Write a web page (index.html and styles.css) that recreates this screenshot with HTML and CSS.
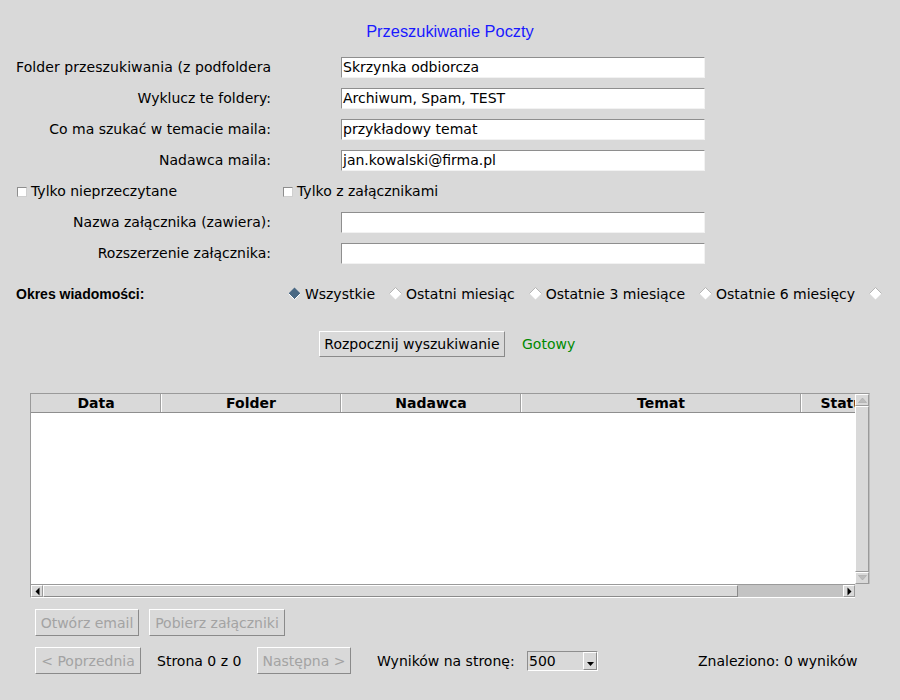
FILE: index.html
```html
<!DOCTYPE html>
<html lang="pl">
<head>
<meta charset="utf-8">
<title>Przeszukiwanie Poczty</title>
<link rel="stylesheet" href="styles.css">
</head>
<body>
<div class="title">Przeszukiwanie Poczty</div>

<div class="form">
  <label class="lbl">Folder przeszukiwania (z podfoldera</label>
  <div class="entry">Skrzynka odbiorcza</div>
  <label class="lbl">Wyklucz te foldery:</label>
  <div class="entry">Archiwum, Spam, TEST</div>
  <label class="lbl">Co ma szukać w temacie maila:</label>
  <div class="entry">przykładowy temat</div>
  <label class="lbl">Nadawca maila:</label>
  <div class="entry">jan.kowalski@firma.pl</div>
  <div class="checks">
    <span class="check check-first"><span class="cbox"></span>Tylko nieprzeczytane</span>
    <span class="check"><span class="cbox"></span>Tylko z załącznikami</span>
  </div>
  <label class="lbl">Nazwa załącznika (zawiera):</label>
  <div class="entry"></div>
  <label class="lbl">Rozszerzenie załącznika:</label>
  <div class="entry"></div>
</div>

<div class="period">
  <span class="period-label">Okres wiadomości:</span>
  <span class="radio"><svg class="dia" width="13" height="13" viewBox="0 0 13 13"><polygon points="6.5,0.5 12.5,6.5 6.5,12.5 0.5,6.5" fill="#4a6984"/><polyline points="12.5,6.5 6.5,12.5 0.5,6.5" fill="none" stroke="#ffffff" stroke-width="1"/></svg>Wszystkie</span>
  <span class="radio"><svg class="dia" width="13" height="13" viewBox="0 0 13 13"><polygon points="6.5,0.5 12.5,6.5 6.5,12.5 0.5,6.5" fill="#ffffff"/><polyline points="0.5,6.5 6.5,0.5 12.5,6.5" fill="none" stroke="#b5b5b5" stroke-width="1"/></svg>Ostatni miesiąc</span>
  <span class="radio"><svg class="dia" width="13" height="13" viewBox="0 0 13 13"><polygon points="6.5,0.5 12.5,6.5 6.5,12.5 0.5,6.5" fill="#ffffff"/><polyline points="0.5,6.5 6.5,0.5 12.5,6.5" fill="none" stroke="#b5b5b5" stroke-width="1"/></svg>Ostatnie 3 miesiące</span>
  <span class="radio"><svg class="dia" width="13" height="13" viewBox="0 0 13 13"><polygon points="6.5,0.5 12.5,6.5 6.5,12.5 0.5,6.5" fill="#ffffff"/><polyline points="0.5,6.5 6.5,0.5 12.5,6.5" fill="none" stroke="#b5b5b5" stroke-width="1"/></svg>Ostatnie 6 miesięcy</span>
  <span class="radio"><svg class="dia" width="13" height="13" viewBox="0 0 13 13"><polygon points="6.5,0.5 12.5,6.5 6.5,12.5 0.5,6.5" fill="#ffffff"/><polyline points="0.5,6.5 6.5,0.5 12.5,6.5" fill="none" stroke="#b5b5b5" stroke-width="1"/></svg></span>
</div>

<div class="action">
  <span class="btn btn-search">Rozpocznij wyszukiwanie</span>
  <span class="status">Gotowy</span>
</div>

<div class="table">
  <div class="tree">
    <div class="thead">
      <span class="th c-data">Data</span>
      <span class="th c-folder">Folder</span>
      <span class="th c-from">Nadawca</span>
      <span class="th c-subj">Temat</span>
      <span class="th c-stat">Status</span>
    </div>
    <div class="tbody"></div>
  </div>
  <div class="vscroll">
    <span class="varrow"><svg width="9" height="6" viewBox="0 0 9 6"><polygon points="0.5,5.5 4.5,1 8.5,5.5" fill="#bcbcbc" stroke="#a8a8a8" stroke-width="0.6"/></svg></span>
    <span class="vthumb"></span>
    <span class="varrow varrow-down"><svg width="9" height="6" viewBox="0 0 9 6"><polygon points="0.5,0.5 4.5,5 8.5,0.5" fill="#bcbcbc" stroke="#a8a8a8" stroke-width="0.6"/></svg></span>
  </div>
  <div class="hscroll">
    <span class="harrow"><svg width="5" height="9" viewBox="0 0 5 9"><polygon points="4.5,0.5 0.5,4.5 4.5,8.5" fill="#000"/></svg></span>
    <span class="hthumb"></span>
    <span class="htrough"></span>
    <span class="harrow"><svg width="5" height="9" viewBox="0 0 5 9"><polygon points="0.5,0.5 4.5,4.5 0.5,8.5" fill="#000"/></svg></span>
  </div>
  <div class="corner"></div>
</div>

<div class="row row-actions">
  <span class="btn btn-dis w-open">Otwórz email</span>
  <span class="btn btn-dis w-att">Pobierz załączniki</span>
</div>

<div class="row row-pager">
  <span class="btn btn-dis w-prev">&lt; Poprzednia</span>
  <span class="pg-text">Strona 0 z 0</span>
  <span class="btn btn-dis w-next">Następna &gt;</span>
  <span class="per-text">Wyników na stronę:</span>
  <span class="combo"><span class="combo-val">500</span><span class="combo-btn"><svg width="9" height="6" viewBox="0 0 9 6"><polygon points="1,1 8,1 4.5,5" fill="#000"/></svg></span></span>
  <span class="found">Znaleziono: 0 wyników</span>
</div>
</body>
</html>
```

FILE: styles.css
```css
* { box-sizing: border-box; }
html, body { margin: 0; padding: 0; }
body {
  width: 900px;
  height: 700px;
  overflow: hidden;
  background: #d9d9d9;
  font-family: "DejaVu Sans", sans-serif;
  font-size: 14px;
  color: #000;
}

.title {
  font-family: "Liberation Sans", Arial, sans-serif;
  font-size: 16.4px;
  line-height: 18px;
  color: #1a1aff;
  text-align: center;
  padding-top: 22px;
}

.form {
  display: grid;
  grid-template-columns: 255px 364px;
  grid-auto-rows: 21px;
  column-gap: 70px;
  row-gap: 10px;
  margin: 17px 0 0 16px;
}
.lbl {
  text-align: right;
  line-height: 21px;
  white-space: nowrap;
  overflow: hidden;
}
.lbl:first-child { letter-spacing: 0.08px; }
.entry {
  background: #fff;
  border: 1px solid;
  border-color: #8e8e8e #f2f2f2 #f2f2f2 #8e8e8e;
  padding-left: 1px;
  line-height: 19px;
  white-space: nowrap;
}
.checks {
  grid-column: 1 / -1;
  display: flex;
  align-items: center;
  padding-left: 1px;
}
.check {
  display: flex;
  align-items: center;
  line-height: 21px;
}
.check-first { width: 266px; }
.cbox {
  width: 10px;
  height: 10px;
  background: #fff;
  border: 1px solid;
  border-color: #8e8e8e #cfcfcf #cfcfcf #8e8e8e;
  margin-right: 4px;
}

.period {
  display: flex;
  align-items: center;
  margin: 19px 0 0 16px;
  height: 21px;
  white-space: nowrap;
}
.period-label {
  font-family: "Liberation Sans", Arial, sans-serif;
  font-weight: bold;
  font-size: 14px;
  width: 272px;
}
.radio {
  display: flex;
  align-items: center;
  margin-right: 14px;
}
.dia { margin-right: 4px; flex: none; }

.action {
  display: flex;
  align-items: center;
  margin: 27px 0 0 319px;
  height: 26px;
}
.btn {
  display: inline-flex;
  align-items: center;
  justify-content: center;
  border: 1px solid;
  border-color: #ffffff #8a8a8a #8a8a8a #ffffff;
  background: #d9d9d9;
  white-space: nowrap;
  flex: none;
}
.btn-search { width: 186px; height: 26px; }
.status { color: #008a00; margin-left: 17px; }

.table {
  display: grid;
  grid-template-columns: 825px 15px;
  grid-template-rows: 191px 14px;
  margin: 36px 0 0 30px;
  width: 840px;
}
.tree {
  border-top: 1px solid #9a9a9a;
  border-left: 1px solid #9a9a9a;
  background: #fff;
  overflow: hidden;
  display: flex;
  flex-direction: column;
}
.thead {
  display: flex;
  height: 19px;
  background: #d9d9d9;
  border-bottom: 1px solid #8e8e8e;
  flex: none;
}
.th {
  flex: none;
  font-weight: bold;
  font-size: 14px;
  text-align: center;
  line-height: 18px;
  border-left: 1px solid #ffffff;
  border-right: 1px solid #a0a0a0;
  white-space: nowrap;
  overflow: hidden;
}
.c-data { width: 130px; border-left-color: #d9d9d9; }
.c-folder { width: 180px; }
.c-from { width: 180px; }
.c-subj { width: 280px; }
.c-stat { width: 90px; }
.tbody { flex: 1; background: #fff; }

.vscroll {
  display: flex;
  flex-direction: column;
  background: #d9d9d9;
  border-top: 1px solid #9a9a9a;
  border-right: 1px solid #bdbdbd;
}
.varrow {
  height: 12px;
  display: flex;
  align-items: center;
  justify-content: center;
  border: 1px solid;
  border-color: #ffffff #9a9a9a #9a9a9a #ffffff;
  flex: none;
}
.vthumb {
  flex: 1;
  border: 1px solid;
  border-color: #ffffff #9a9a9a #9a9a9a #ffffff;
}

.hscroll {
  display: flex;
  background: #c3c3c3;
  border-left: 1px solid #9a9a9a;
  border-top: 1px solid #9a9a9a;
  border-bottom: 1px solid #ffffff;
}
.harrow {
  width: 12px;
  display: flex;
  align-items: center;
  justify-content: center;
  background: #d9d9d9;
  border: 1px solid;
  border-color: #ffffff #9a9a9a #9a9a9a #ffffff;
  flex: none;
}
.hthumb {
  width: 695px;
  background: #d9d9d9;
  border: 1px solid;
  border-color: #ffffff #8a8a8a #8a8a8a #ffffff;
  flex: none;
}
.htrough { flex: 1; }
.corner { background: #d9d9d9; }

.row {
  display: flex;
  align-items: center;
  margin-left: 35px;
  height: 27px;
}
.row-actions { margin-top: 11px; gap: 10px; }
.row-pager { margin-top: 11px; }
.btn-dis { color: #a3a3a3; height: 27px; }
.w-open { width: 104px; }
.w-att { width: 136px; }
.w-prev { width: 106px; }
.w-next { width: 94px; }
.pg-text { width: 116px; padding-left: 16px; flex: none; white-space: nowrap; }
.per-text { width: 176px; padding-left: 26px; flex: none; white-space: nowrap; }
.combo {
  display: flex;
  width: 71px;
  height: 20px;
  border: 1px solid;
  border-color: #8e8e8e #ffffff #ffffff #8e8e8e;
  background: #d9d9d9;
  flex: none;
}
.combo-val { flex: 1; padding-left: 1px; line-height: 18px; }
.combo-btn {
  width: 14px;
  display: flex;
  align-items: flex-end;
  justify-content: center;
  padding-bottom: 2px;
  border: 1px solid;
  border-color: #ffffff #8a8a8a #8a8a8a #ffffff;
}
.found { padding-left: 100px; white-space: nowrap; }
```
